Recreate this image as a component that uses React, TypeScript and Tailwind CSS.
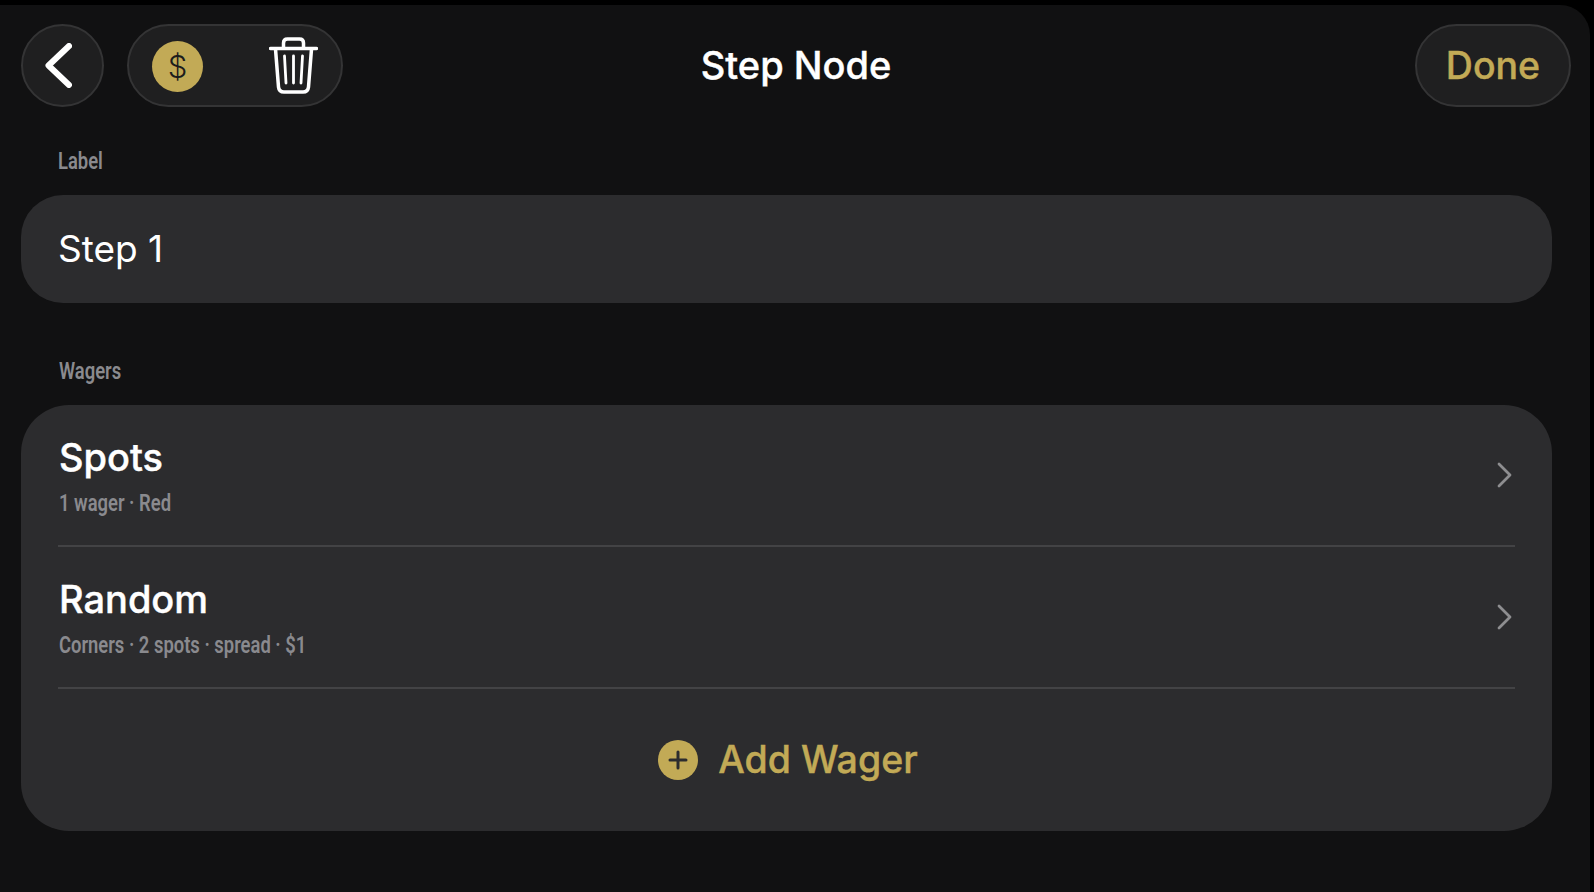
const GOLD = '#c2aa56';

function TrashIcon() {
	return (
		<svg width="49" height="57" viewBox="0 0 49 57" fill="none" stroke="white" strokeLinecap="round" strokeLinejoin="round">
			<path d="M1.5 11.5H47.5" strokeWidth="3.5" />
			<path d="M6.5 12L9.5 50Q10 55 15 55H34Q39 55 39.5 50L42.5 12" strokeWidth="3.5" />
			<path d="M14.5 11V6Q14.5 2 18.5 2H30.5Q34.5 2 34.5 6V11" strokeWidth="3.5" />
			<path d="M15.5 19L17 46M24.5 19V46M33.5 19L32 46" strokeWidth="2.8" />
		</svg>
	);
}

function BackChevron() {
	return (
		<svg width="27" height="45" viewBox="0 0 27 45" fill="none" stroke="white" strokeWidth="6" strokeLinecap="round" strokeLinejoin="round">
			<path d="M24 3L3.5 22.5L24 42" />
		</svg>
	);
}

function RowChevron() {
	return (
		<svg width="15" height="26" viewBox="0 0 15 26" fill="none" stroke="#8e8e90" strokeWidth="2.8" strokeLinecap="round" strokeLinejoin="round">
			<path d="M2 2L13 13L2 24" />
		</svg>
	);
}

function SmallText({ children }: { children: string }) {
	return (
		<div className="inline-block origin-left scale-x-[0.8] whitespace-nowrap text-[23px] leading-[28px] font-semibold text-[#8a8a8e] font-['Roboto',sans-serif]">
			{children}
		</div>
	);
}

function WagerRow({ title, detail, height }: { title: string; detail: string; height: string }) {
	return (
		<div className={`flex items-center border-b-2 border-[#434345] ${height}`}>
			<div className="flex-1 pl-[1px] pt-[2px]">
				<div className="text-[38px] leading-[46px] font-medium [-webkit-text-stroke:0.4px_currentColor] text-white">{title}</div>
				<div className="mt-[10px]">
					<SmallText>{detail}</SmallText>
				</div>
			</div>
			<div className="mr-[3px]">
				<RowChevron />
			</div>
		</div>
	);
}

export default function App() {
	return (
		<div className="w-[1594px] h-[892px] bg-black pt-[5px] pr-[4px] overflow-hidden font-['Inter',sans-serif]">
			<div className="h-full bg-[#111112] rounded-tr-[30px] pt-[19px] pl-[21px] pr-[19px]">
				<header className="grid grid-cols-[1fr_auto_1fr] items-center h-[83px]">
					<div className="flex items-center gap-[23px]">
						<div className="flex items-center justify-center size-[83px] rounded-full bg-[#1f1f20] border-2 border-[#343435]">
							<div className="mr-[8px]">
								<BackChevron />
							</div>
						</div>
						<div className="flex items-center w-[216px] h-[83px] rounded-full bg-[#1f1f20] border-2 border-[#343435] pl-[23px]">
							<div className="mt-[1px] flex items-center justify-center size-[51px] rounded-full bg-[#c2aa56] text-[#1c1c1c] text-[31px] font-light leading-none">
								$
							</div>
							<div className="ml-[66px]">
								<TrashIcon />
							</div>
						</div>
					</div>
					<h1 className="text-[38px] font-medium [-webkit-text-stroke:0.4px_currentColor] text-white">Step Node</h1>
					<div className="flex justify-end">
						<div
							className="flex items-center justify-center w-[156px] h-[83px] rounded-full bg-[#1f1f20] border-2 border-[#343435] pt-[1px] text-[37.5px] font-medium [-webkit-text-stroke:0.4px_currentColor]"
							style={{ color: GOLD }}
						>
							Done
						</div>
					</div>
				</header>

				<div className="mt-[39px] mr-[19px]">
					<div className="pl-[37px] pt-[2px] h-[26px]">
						<SmallText>Label</SmallText>
					</div>
					<div className="mt-[23px] h-[108px] rounded-[42px] bg-[#2c2c2e] flex items-center px-[37px] text-[37px] text-white">
						Step 1
					</div>

					<div className="mt-[55px] pl-[38px] h-[26px]">
						<SmallText>Wagers</SmallText>
					</div>
					<div className="mt-[21px] h-[426px] rounded-[48px] bg-[#2c2c2e] px-[37px]">
						<WagerRow title="Spots" detail="1 wager · Red" height="h-[142px]" />
						<WagerRow title="Random" detail="Corners · 2 spots · spread · $1" height="h-[142px]" />
						<div className="flex items-center justify-center h-[142px] gap-[20px] pl-[3px]">
							<div className="flex items-center justify-center size-[40px] rounded-full bg-[#c2aa56]">
								<svg width="20" height="20" viewBox="0 0 20 20" stroke="#2c2c2e" strokeWidth="3" strokeLinecap="round">
									<path d="M10 2V18M2 10H18" />
								</svg>
							</div>
							<span className="text-[37.5px] font-medium [-webkit-text-stroke:0.4px_currentColor] text-[#c2aa56]">Add Wager</span>
						</div>
					</div>
				</div>
			</div>
		</div>
	);
}
